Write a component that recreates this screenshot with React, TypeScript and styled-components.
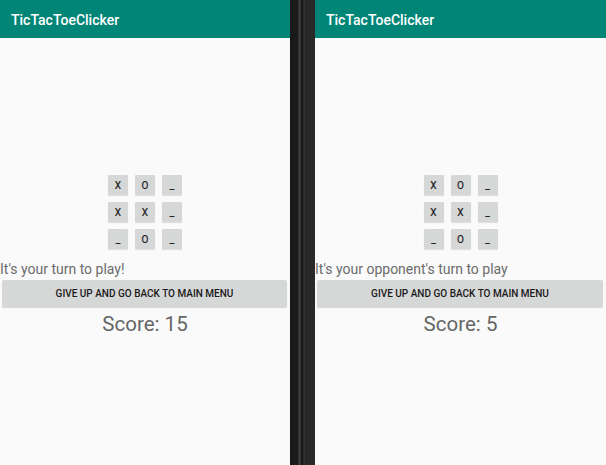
import React from "react";
import styled, { createGlobalStyle } from "styled-components";

const Global = createGlobalStyle`
  html, body { margin: 0; padding: 0; background: #fafafa; }
  body { font-family: Roboto, "Noto Sans", sans-serif; }
`;

const Screen = styled.div`
  display: flex;
  width: 606px;
  height: 465px;
  overflow: hidden;
`;

const Phone = styled.div<{ $w: number }>`
  width: ${(p) => p.$w}px;
  flex: none;
  display: flex;
  flex-direction: column;
  background: #fafafa;
`;

const AppBar = styled.div`
  height: 38px;
  flex: none;
  background: #008577;
  color: #ffffff;
  font-size: 14px;
  font-weight: 500;
  display: flex;
  align-items: center;
  padding-left: 11px;
  padding-top: 2px;
  box-sizing: border-box;
`;

const Content = styled.div`
  display: flex;
  flex-direction: column;
  padding-top: 137px;
`;

const Board = styled.div`
  align-self: center;
  display: grid;
  grid-template-columns: repeat(3, 20px);
  grid-auto-rows: 20px;
  gap: 7px;
`;

const Cell = styled.div`
  background: #d6d7d7;
  border-radius: 1px;
  box-shadow: 0 1px 1px rgba(0, 0, 0, 0.12);
  display: flex;
  align-items: center;
  justify-content: center;
  font-size: 10px;
  font-weight: 400;
  color: #1a1a1a;
  -webkit-text-stroke: 0.2px #1a1a1a;
`;

const Status = styled.div`
  margin-top: 12px;
  font-size: 14px;
  color: #6b6b6b;
  line-height: 16px;
  white-space: nowrap;
`;

const MenuButton = styled.div`
  margin: 3px 3px 0 2px;
  height: 27px;
  background: #d6d7d7;
  border-radius: 2px;
  box-shadow: 0 1px 1px rgba(0, 0, 0, 0.15);
  display: flex;
  align-items: center;
  justify-content: center;
  font-size: 10px;
  font-weight: 500;
  color: #1a1a1a;
  text-transform: uppercase;
`;

const Score = styled.div`
  margin-top: 5px;
  text-align: center;
  font-size: 20.5px;
  color: #666666;
  line-height: 24px;
`;

const Divider = styled.div`
  width: 25px;
  flex: none;
  background: linear-gradient(
    to right,
    #181818 0px,
    #1c1c1c 8px,
    #3a3a3a 9px,
    #4a4a4a 10px,
    #1a1a1a 11px,
    #1a1a1a 13px,
    #3a3a3a 14px,
    #2a2a2a 15px,
    #262626 16px,
    #2a2a2a 25px
  );
`;

const board = [
  ["X", "O", "_"],
  ["X", "X", "_"],
  ["_", "O", "_"],
];

function GameScreen({ width, status, score }: { width: number; status: string; score: number }) {
  return (
    <Phone $w={width}>
      <AppBar>TicTacToeClicker</AppBar>
      <Content>
        <Board>
          {board.flat().map((c, i) => (
            <Cell key={i}>{c}</Cell>
          ))}
        </Board>
        <Status>{status}</Status>
        <MenuButton>Give up and go back to main menu</MenuButton>
        <Score>Score: {score}</Score>
      </Content>
    </Phone>
  );
}

export default function App() {
  return (
    <>
      <Global />
      <Screen>
        <GameScreen width={290} status="It's your turn to play!" score={15} />
        <Divider />
        <GameScreen width={291} status="It's your opponent's turn to play" score={5} />
      </Screen>
    </>
  );
}
